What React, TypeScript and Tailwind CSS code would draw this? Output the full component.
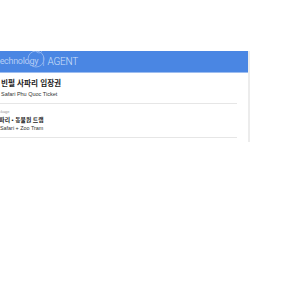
import React from "react";

export default function App() {
  const font = { fontFamily: '"Liberation Sans", "Noto Sans CJK KR", Arial, sans-serif' };
  const roboto = { fontFamily: 'Roboto, "Liberation Sans", sans-serif' };
  return (
    <div className="w-[300px] h-[300px] bg-white overflow-hidden" style={font}>
      <div className="pt-[51px]">
        <div className="w-[250px] border-r-2 border-[#ececec] pb-[4px]">
          <div className="h-[22px] bg-[#4a86e3] border-b border-[#9dbdf0] flex items-center relative overflow-hidden">
            <span className="ml-[-3px] text-[9px] text-[#b4cdf5] leading-none tracking-[-0.3px]" style={roboto}>technology</span>
            <svg className="absolute left-[24px] top-[-5px]" width="24" height="26" viewBox="0 0 24 26">
              <circle cx="12" cy="13" r="8" fill="none" stroke="#8fb4ef" strokeWidth="1" />
              <circle cx="15" cy="4" r="3" fill="none" stroke="#8fb4ef" strokeWidth="0.8" />
            </svg>
            <span className="ml-[4px] text-[#9ebff2] text-[9px] leading-none">|</span>
            <span className="ml-[3px] text-[10px] text-[#d0e0f9] leading-none font-light tracking-[-0.2px]" style={roboto}>AGENT</span>
          </div>
          <div className="pr-[11px]">
            <div className="pt-[6px] pb-[5px] border-b border-[#e6e6e6]">
              <div className="text-[7.6px] leading-[10px] font-bold text-[#222] ml-[1px]">빈펄 사파리 입장권</div>
              <div className="mt-[1px] text-[5.5px] leading-[8px] text-[#333] ml-[1px]">Safari Phu Quoc Ticket</div>
            </div>
            <div className="pt-[5px] pb-[5px] border-b border-[#e6e6e6]">
              <div className="text-[4px] leading-[5px] text-[#999] ml-[-6px]">Package</div>
              <div className="mt-[2px] text-[5.8px] leading-[8px] font-bold text-[#222] ml-[-6px]">사파리 • 동물원 트램</div>
              <div className="mt-[1px] text-[5.4px] leading-[7px] text-[#333] ml-0">Safari + Zoo Tram</div>
            </div>
          </div>
        </div>
      </div>
    </div>
  );
}
